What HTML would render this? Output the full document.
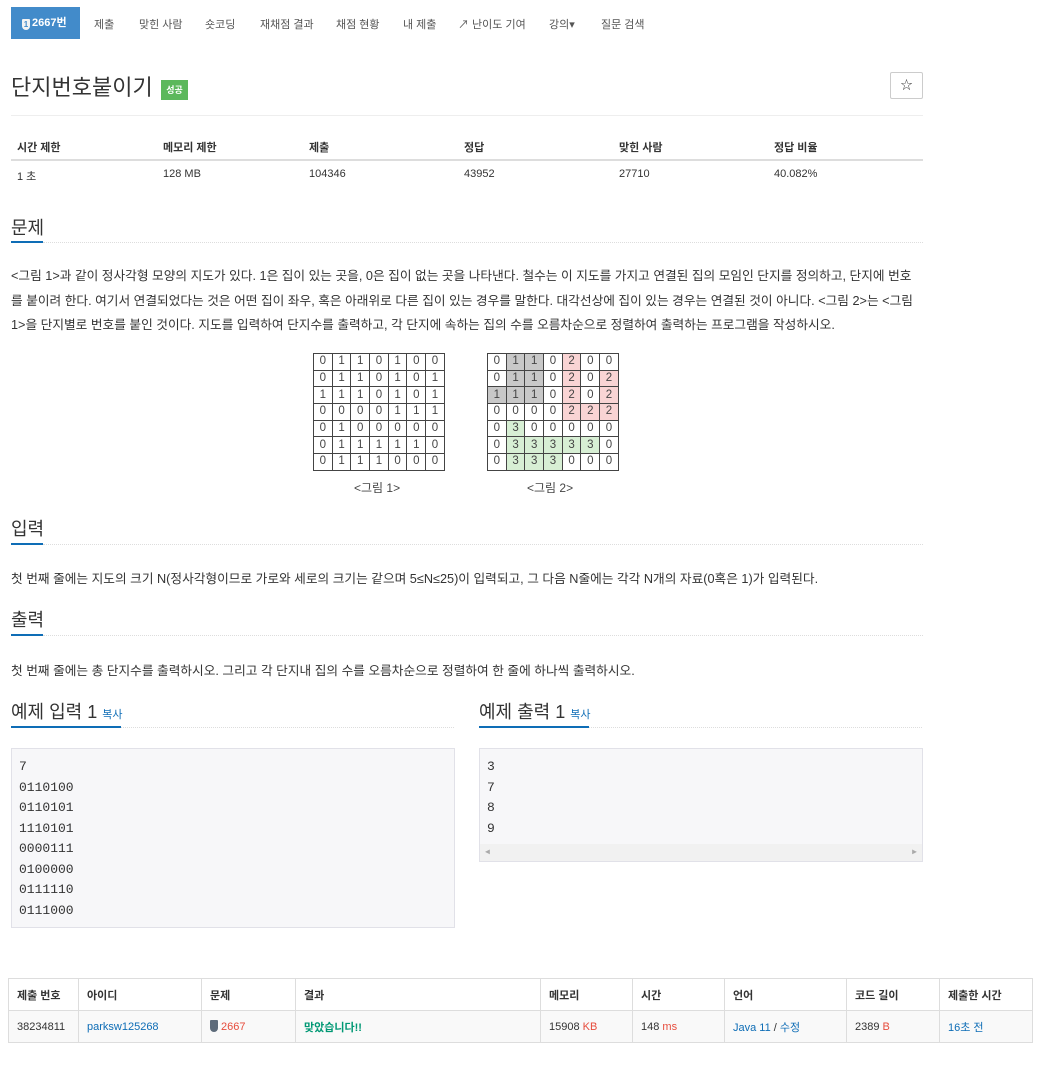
<!DOCTYPE html>
<html><head><meta charset="utf-8">
<style>
*{margin:0;padding:0;box-sizing:border-box}
body{width:1052px;height:1080px;background:#fff;font-family:"Liberation Sans","Noto Sans CJK KR",sans-serif;color:#333;position:relative;overflow:hidden}
.a{position:absolute;white-space:nowrap}
.nav{font-size:11px;color:#555;top:16px}
.h2{font-size:18px;color:#333}
.ul{position:absolute;height:2px;background:#0e6db6}
.dot{position:absolute;border-top:1px dotted #ddd;height:0}
.p{font-size:12.7px;color:#333}
.g{position:absolute;border-collapse:collapse;font-size:11.5px;color:#444}
.g td{border:1px solid #444;width:18.7px;height:16.7px;text-align:center;padding:0;line-height:15px}
.gr{background:#c8c8c8}.pk{background:#f9d4d4}.gn{background:#d7efd4}
.box{position:absolute;background:#f7f7f9;border:1px solid #e1e1e8}
.mono{font-family:"Liberation Mono",monospace;font-size:13px;color:#333;line-height:20.5px}
table.s{position:absolute;border-collapse:collapse;font-size:11px}
table.s td{border:1px solid #ddd;padding:0 8px;height:32px}
</style></head><body>
<div class="a" style="left:11px;top:7px;width:69px;height:32px;background:#428bca;color:#fff;font-size:11px;font-weight:bold;line-height:32px;padding-left:11px"><span style="display:inline-block;width:8px;height:11px;background:#f3f3f3;border-radius:1px 1px 4px 4px;vertical-align:-1px;margin-right:2px;color:#428bca;font-size:8px;line-height:11px;text-align:center">1</span>2667번</div>
<div class="a nav" style="left:94px">제출</div>
<div class="a nav" style="left:139px">맞힌 사람</div>
<div class="a nav" style="left:205px">숏코딩</div>
<div class="a nav" style="left:260px">재채점 결과</div>
<div class="a nav" style="left:336px">채점 현황</div>
<div class="a nav" style="left:403px">내 제출</div>
<div class="a nav" style="left:458px">&#x2197;&#xFE0E; 난이도 기여</div>
<div class="a nav" style="left:549px">강의&#9662;</div>
<div class="a nav" style="left:601px">질문 검색</div>

<div class="a" style="left:11px;top:70px;font-size:22px;color:#333">단지번호붙이기</div>
<div class="a" style="left:161px;top:80px;width:27px;height:20px;background:#5cb85c;color:#fff;font-size:9px;font-weight:bold;line-height:20px;text-align:center">성공</div>
<div class="a" style="left:890px;top:72px;width:33px;height:27px;border:1px solid #ccc;border-radius:2px;text-align:center;line-height:25px;font-size:12px">☆</div>
<div class="a" style="left:11px;top:115px;width:912px;border-top:1px solid #eee"></div>

<div class="a" style="top:139px;left:0;font-size:11px;font-weight:bold;color:#333">
<span class="a" style="left:17px">시간 제한</span><span class="a" style="left:163px">메모리 제한</span><span class="a" style="left:309px">제출</span><span class="a" style="left:464px">정답</span><span class="a" style="left:619px">맞힌 사람</span><span class="a" style="left:774px">정답 비율</span></div>
<div class="a" style="left:11px;top:159px;width:912px;border-top:2px solid #ddd"></div>
<div class="a" style="top:168px;left:0;font-size:11px;color:#333">
<span class="a" style="left:17px">1 초</span><span class="a" style="left:163px">128 MB</span><span class="a" style="left:309px">104346</span><span class="a" style="left:464px">43952</span><span class="a" style="left:619px">27710</span><span class="a" style="left:774px">40.082%</span></div>

<div class="a h2" style="left:11px;top:214px">문제</div>
<div class="ul" style="left:11px;top:241px;width:32px"></div>
<div class="dot" style="left:43px;top:242px;width:880px"></div>
<div class="a p" style="left:11px;top:265px">&lt;그림 1&gt;과 같이 정사각형 모양의 지도가 있다. 1은 집이 있는 곳을, 0은 집이 없는 곳을 나타낸다. 철수는 이 지도를 가지고 연결된 집의 모임인 단지를 정의하고, 단지에 번호</div>
<div class="a p" style="left:11px;top:290px">를 붙이려 한다. 여기서 연결되었다는 것은 어떤 집이 좌우, 혹은 아래위로 다른 집이 있는 경우를 말한다. 대각선상에 집이 있는 경우는 연결된 것이 아니다. &lt;그림 2&gt;는 &lt;그림</div>
<div class="a p" style="left:11px;top:314px">1&gt;을 단지별로 번호를 붙인 것이다. 지도를 입력하여 단지수를 출력하고, 각 단지에 속하는 집의 수를 오름차순으로 정렬하여 출력하는 프로그램을 작성하시오.</div>

<table class="g" style="left:313px;top:353px">
<tr><td>0</td><td>1</td><td>1</td><td>0</td><td>1</td><td>0</td><td>0</td></tr>
<tr><td>0</td><td>1</td><td>1</td><td>0</td><td>1</td><td>0</td><td>1</td></tr>
<tr><td>1</td><td>1</td><td>1</td><td>0</td><td>1</td><td>0</td><td>1</td></tr>
<tr><td>0</td><td>0</td><td>0</td><td>0</td><td>1</td><td>1</td><td>1</td></tr>
<tr><td>0</td><td>1</td><td>0</td><td>0</td><td>0</td><td>0</td><td>0</td></tr>
<tr><td>0</td><td>1</td><td>1</td><td>1</td><td>1</td><td>1</td><td>0</td></tr>
<tr><td>0</td><td>1</td><td>1</td><td>1</td><td>0</td><td>0</td><td>0</td></tr>
</table>
<div class="a" style="left:354px;top:479px;font-size:12px;color:#444">&lt;그림 1&gt;</div>
<table class="g" style="left:487px;top:353px">
<tr><td>0</td><td class="gr">1</td><td class="gr">1</td><td>0</td><td class="pk">2</td><td>0</td><td>0</td></tr>
<tr><td>0</td><td class="gr">1</td><td class="gr">1</td><td>0</td><td class="pk">2</td><td>0</td><td class="pk">2</td></tr>
<tr><td class="gr">1</td><td class="gr">1</td><td class="gr">1</td><td>0</td><td class="pk">2</td><td>0</td><td class="pk">2</td></tr>
<tr><td>0</td><td>0</td><td>0</td><td>0</td><td class="pk">2</td><td class="pk">2</td><td class="pk">2</td></tr>
<tr><td>0</td><td class="gn">3</td><td>0</td><td>0</td><td>0</td><td>0</td><td>0</td></tr>
<tr><td>0</td><td class="gn">3</td><td class="gn">3</td><td class="gn">3</td><td class="gn">3</td><td class="gn">3</td><td>0</td></tr>
<tr><td>0</td><td class="gn">3</td><td class="gn">3</td><td class="gn">3</td><td>0</td><td>0</td><td>0</td></tr>
</table>
<div class="a" style="left:527px;top:479px;font-size:12px;color:#444">&lt;그림 2&gt;</div>

<div class="a h2" style="left:11px;top:515px">입력</div>
<div class="ul" style="left:11px;top:543px;width:32px"></div>
<div class="dot" style="left:43px;top:544px;width:880px"></div>
<div class="a p" style="left:11px;top:568px">첫 번째 줄에는 지도의 크기 N(정사각형이므로 가로와 세로의 크기는 같으며 5≤N≤25)이 입력되고, 그 다음 N줄에는 각각 N개의 자료(0혹은 1)가 입력된다.</div>

<div class="a h2" style="left:11px;top:606px">출력</div>
<div class="ul" style="left:11px;top:634px;width:32px"></div>
<div class="dot" style="left:43px;top:635px;width:880px"></div>
<div class="a p" style="left:11px;top:660px">첫 번째 줄에는 총 단지수를 출력하시오. 그리고 각 단지내 집의 수를 오름차순으로 정렬하여 한 줄에 하나씩 출력하시오.</div>

<div class="a h2" style="left:11px;top:698px">예제 입력 1 <span style="font-size:11px;color:#0e6db6">복사</span></div>
<div class="ul" style="left:11px;top:726px;width:110px"></div>
<div class="dot" style="left:121px;top:727px;width:333px"></div>
<div class="a h2" style="left:479px;top:698px">예제 출력 1 <span style="font-size:11px;color:#0e6db6">복사</span></div>
<div class="ul" style="left:479px;top:726px;width:110px"></div>
<div class="dot" style="left:589px;top:727px;width:333px"></div>

<div class="box mono" style="left:11px;top:748px;width:444px;height:180px;padding:8px 7px">7<br>0110100<br>0110101<br>1110101<br>0000111<br>0100000<br>0111110<br>0111000</div>
<div class="box mono" style="left:479px;top:748px;width:444px;height:114px;padding:8px 7px">3<br>7<br>8<br>9
<div style="position:absolute;left:0;right:0;bottom:0;height:17px;background:#f1f1f1;font-size:8px;color:#aaa;line-height:17px"><span style="position:absolute;left:5px">◀</span><span style="position:absolute;right:5px">▶</span></div></div>

<table class="s" style="left:8px;top:978px;width:1025px">
<tr style="font-weight:bold;color:#333"><td style="width:70px">제출 번호</td><td style="width:123px">아이디</td><td style="width:94px">문제</td><td style="width:245px">결과</td><td style="width:92px">메모리</td><td style="width:92px">시간</td><td style="width:122px">언어</td><td style="width:93px">코드 길이</td><td>제출한 시간</td></tr>
<tr style="background:#f9f9f9;color:#333"><td>38234811</td><td style="color:#0e6db6">parksw125268</td><td><span style="display:inline-block;width:8px;height:12px;background:#5d6b7a;border-radius:1px 1px 4px 4px;vertical-align:-2px;margin-right:3px"></span><span style="color:#e74c3c">2667</span></td><td style="color:#009874;font-weight:bold">맞았습니다!!</td><td>15908 <span style="color:#e74c3c">KB</span></td><td>148 <span style="color:#e74c3c">ms</span></td><td style="color:#0e6db6">Java 11 <span style="color:#333">/</span> 수정</td><td>2389 <span style="color:#e74c3c">B</span></td><td style="color:#0e6db6">16초 전</td></tr>
</table>
</body></html>
